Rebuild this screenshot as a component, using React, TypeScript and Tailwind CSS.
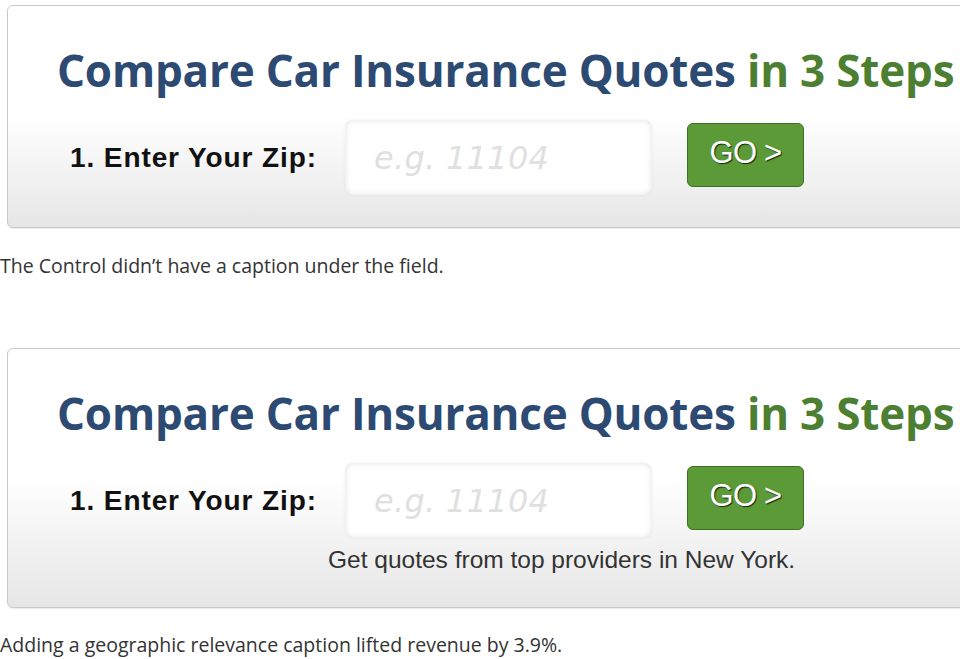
import React from 'react';

const QuoteBox: React.FC<{ caption?: string }> = ({ caption }) => (
  <div className="ml-[7px] w-[990px] rounded-[6px] border border-[#c9c9c9] bg-gradient-to-b from-white via-white to-[#e6e6e6] shadow-[0_1px_1px_rgba(0,0,0,0.08)]">
    <h1
      className="pl-[49px] pt-[36px] text-[44px] font-bold leading-[56px] tracking-[-0.2px] text-[#2c4a72]"
      style={{ fontFamily: '"Open Sans", sans-serif' }}
    >
      Compare Car Insurance Quotes <span className="text-[#4c7f31]">in 3 Steps</span>
    </h1>
    <div className="flex items-center pl-[62px] pt-[22px]" style={{ fontFamily: '"Liberation Sans", Arial, sans-serif' }}>
      <span className="text-[28px] font-bold tracking-[0.9px] text-[#111]">1. Enter Your Zip:</span>
      <div className="ml-[28px] flex h-[75px] w-[307px] items-center rounded-[8px] bg-white pl-[29px] shadow-[inset_0_0_6px_rgba(0,0,0,0.12),0_0_3px_rgba(0,0,0,0.06)]">
        <span className="text-[32px] italic tracking-[0.3px] text-[#e0e0e0]" style={{ fontFamily: '"DejaVu Sans", sans-serif' }}>e.g. 11104</span>
      </div>
      <button className="mb-[5px] ml-[35px] h-[64px] w-[117px] rounded-[6px] border border-[#3e7023] bg-[#5b9a37] pb-[4px] text-[31px] tracking-[-0.8px] text-white [text-shadow:1px_1px_1px_rgba(0,0,0,0.75)]">
        GO &gt;
      </button>
    </div>
    {caption ? (
      <p className="ml-[320px] mt-[8px] pb-[33px] text-[24.5px] leading-[28px] text-[#333]" style={{ fontFamily: '"Liberation Sans", Arial, sans-serif' }}>
        {caption}
      </p>
    ) : (
      <div className="h-[32px]" />
    )}
  </div>
);

export default function App() {
  return (
    <div className="h-[659px] w-[960px] overflow-hidden bg-white pt-[5px]" style={{ fontFamily: '"Open Sans", sans-serif' }}>
      <QuoteBox />
      <p className="mt-[25px] text-[19.5px] leading-[26px] text-[#333]">The Control didn’t have a caption under the field.</p>
      <div className="h-[69px]" />
      <QuoteBox caption="Get quotes from top providers in New York." />
      <p className="mt-[24px] text-[19.5px] leading-[26px] text-[#333]">Adding a geographic relevance caption lifted revenue by 3.9%.</p>
    </div>
  );
}
